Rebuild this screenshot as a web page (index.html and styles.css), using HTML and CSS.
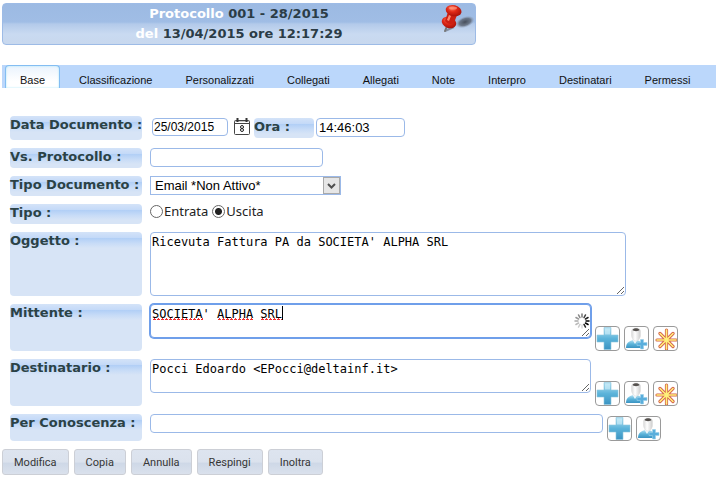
FILE: index.html
```html
<!DOCTYPE html>
<html lang="it">
  <head>
    <meta charset="UTF-8" />
    <meta name="viewport" content="width=device-width, initial-scale=1.0" />
    <title>Protocollo 001 - 28/2015</title>
    <link rel="stylesheet" href="styles.css">
  </head>

  <body>
    <!-- Icone condivise -->
    <svg class="defs" width="0" height="0" aria-hidden="true">
      <defs>
        <linearGradient id="blue" x1="0" y1="0" x2="0" y2="1">
          <stop offset="0" stop-color="#b4e0f2" />
          <stop offset="0.5" stop-color="#5cb4da" />
          <stop offset="1" stop-color="#3a93c2" />
        </linearGradient>
        <linearGradient id="body" x1="0" y1="0" x2="1" y2="0">
          <stop offset="0" stop-color="#d8d8d8" />
          <stop offset="0.4" stop-color="#ffffff" />
          <stop offset="1" stop-color="#cccccc" />
        </linearGradient>
        <radialGradient id="red" cx="0.35" cy="0.35" r="0.7">
          <stop offset="0" stop-color="#ff7a5c" />
          <stop offset="0.45" stop-color="#e02a18" />
          <stop offset="1" stop-color="#a8120a" />
        </radialGradient>
        <radialGradient id="shadow">
          <stop offset="0" stop-color="#3c424c" stop-opacity="0.9" />
          <stop offset="0.6" stop-color="#5d6674" stop-opacity="0.8" />
          <stop offset="1" stop-color="#8f9cb0" stop-opacity="0" />
        </radialGradient>
      </defs>
      <symbol id="plus" viewBox="0 0 23 23">
        <path d="M8 .5h7v7.500h7v7h-7v7.500h-7v-7.500h-7v-7h7z" fill="url(#blue)" stroke="#8cc6de" stroke-width="0.600" />
        <path d="M9 1.500h5v6h-5z" fill="#d4f1fb" opacity="0.600" />
      </symbol>
      <symbol id="user" viewBox="0 0 23 23">
        <path d="M1 21c0-5 3-7 7-8h4c4 1 5 4 5 8z" fill="url(#blue)" />
        <path d="M7 12l3 5 3-5z" fill="#eef6fa" />
        <path d="M6.500 4c0-4 9-4 9 0v4c0 3-2 6-4.500 6s-4.500-3-4.500-6z" fill="url(#body)" stroke="#dcdcdc" stroke-width="0.500" />
        <path d="M7.500 3c1-2.500 6-2.500 7 0-1 1.500-6 1.500-7 0z" fill="#55514e" />
        <path d="M15.500 12.500h3v3h3.500v3h-3.500v3.500h-3v-3.500h-3.500v-3h3.500z" fill="#5aaedc" stroke="#9cd0ea" stroke-width="0.600" />
      </symbol>
      <symbol id="star" viewBox="0 0 23 23">
        <path d="M12.500 3v19M3 13h19M6 6.500l13 13M19 6.500l-13 13" stroke="#d4604a" stroke-width="3.200" stroke-linecap="round" />
        <path d="M12.500 3v19M3 13h19M6 6.500l13 13M19 6.500l-13 13" stroke="#fff07a" stroke-width="1.600" stroke-linecap="round" />
      </symbol>
    </svg>

    <header>
      <h1>
        <span>Protocollo</span> 001 - 28/2015<br />
        <span>del</span> 13/04/2015 ore 12:17:29
      </h1>
      <svg class="pin" width="36" height="30" viewBox="0 0 36 30" aria-hidden="true">
        <ellipse cx="26" cy="18" rx="10" ry="5.500" fill="url(#shadow)" transform="rotate(-20 26 18)" />
        <path d="M15 23l-9 4" stroke="#6d7684" stroke-width="2" opacity="0.700" />
        <path d="M8 22l-2 5" stroke="#777" stroke-width="2" stroke-linecap="round" />
        <ellipse cx="10" cy="18.500" rx="7.500" ry="5.500" fill="url(#red)" transform="rotate(20 10 18.500)" />
        <path d="M9 8l9 3-3 8c-3 2-7 1-9-2z" fill="#cc2013" />
        <path d="M10 11l2 1-2 5-2-1z" fill="#ff8a70" />
        <ellipse cx="14.500" cy="6.500" rx="8" ry="5.500" fill="url(#red)" transform="rotate(15 14 7)" />
        <ellipse cx="14" cy="4" rx="4" ry="1.500" fill="#ff9a80" opacity="0.700" />
      </svg>
    </header>

    <nav>
      <a class="active" href="#base">Base</a>
      <a href="#classificazione">Classificazione</a>
      <a href="#personalizzati">Personalizzati</a>
      <a href="#collegati">Collegati</a>
      <a href="#allegati">Allegati</a>
      <a href="#note">Note</a>
      <a href="#interpro">Interpro</a>
      <a href="#destinatari">Destinatari</a>
      <a href="#permessi">Permessi</a>
    </nav>

    <form>
      <div class="row">
        <label class="lbl" for="data">Data Documento :</label>
        <div class="fields date-fields">
          <input id="data" class="date" type="text" value="25/03/2015" />
          <button class="calendar" type="button" aria-label="Calendario">
            <svg width="16" height="17" viewBox="0 0 16 17">
              <rect x="0.500" y="2.500" width="15" height="14" rx="1" fill="#fff" stroke="#444" />
              <path d="M0 5.500h16" stroke="#444" />
              <path d="M1 3.500h14" stroke="#c8c8c8" />
              <path d="M3.500 0v4M12.500 0v4" stroke="#333" stroke-width="2" />
              <circle cx="8" cy="9" r="1.500" fill="none" stroke="#222" />
              <circle cx="8" cy="12" r="1.500" fill="none" stroke="#222" />
            </svg>
          </button>
          <label class="lbl ora" for="ora">Ora :</label>
          <input id="ora" class="time" type="text" value="14:46:03" />
        </div>
      </div>

      <div class="row">
        <label class="lbl" for="vs">Vs. Protocollo :</label>
        <div class="fields"><input id="vs" class="vs" type="text" /></div>
      </div>

      <div class="row">
        <label class="lbl" for="tipodoc">Tipo Documento :</label>
        <div class="fields">
          <div class="select">
            <select id="tipodoc">
              <option>Email *Non Attivo*</option>
            </select>
            <svg width="17" height="17" viewBox="0 0 17 17" aria-hidden="true">
              <rect x="0.500" y="0.500" width="16" height="16" fill="#e6e6e6" stroke="#a9a9a9" />
              <path d="M5 7l3.500 3.500L12 7" fill="none" stroke="#505050" stroke-width="2" />
            </svg>
          </div>
        </div>
      </div>

      <div class="row" role="radiogroup" aria-labelledby="tipo">
        <span class="lbl" id="tipo">Tipo :</span>
        <div class="fields radios">
          <label><input type="radio" name="tipo" />Entrata</label>
          <label><input type="radio" name="tipo" checked />Uscita</label>
        </div>
      </div>

      <div class="row">
        <label class="lbl" for="oggetto">Oggetto :</label>
        <div class="fields"><textarea id="oggetto" class="oggetto">Ricevuta Fattura PA da SOCIETA' ALPHA SRL</textarea></div>
      </div>

      <div class="row">
        <label class="lbl" for="mittente">Mittente :</label>
        <div class="fields">
          <div class="box">
            <textarea id="mittente" class="soggetto focused" spellcheck="false">SOCIETA' ALPHA SRL</textarea>
            <!-- Sottolineatura ortografica e cursore -->
            <div class="spelling" aria-hidden="true"><i class="w7"></i><i class="w5"></i><i class="w3"></i><b></b></div>
            <svg class="loader" width="16" height="16" viewBox="-8 -8 16 16" aria-hidden="true">
              <g stroke-width="1.500" stroke-linecap="round">
                <path d="M0-4v-3" stroke="#777" />
                <path d="M0-4v-3" stroke="#444" transform="rotate(30)" />
                <path d="M0-4v-3" stroke="#222" transform="rotate(60)" />
                <path d="M0-4v-3" stroke="#000" transform="rotate(90)" />
                <path d="M0-4v-3" stroke="#000" transform="rotate(120)" />
                <path d="M0-4v-3" stroke="#222" transform="rotate(150)" />
                <path d="M0-4v-3" stroke="#ddd" transform="rotate(180)" />
                <path d="M0-4v-3" stroke="#ccc" transform="rotate(210)" />
                <path d="M0-4v-3" stroke="#bbb" transform="rotate(240)" />
                <path d="M0-4v-3" stroke="#aaa" transform="rotate(270)" />
                <path d="M0-4v-3" stroke="#999" transform="rotate(300)" />
                <path d="M0-4v-3" stroke="#888" transform="rotate(330)" />
              </g>
            </svg>
          </div>
          <div class="tools">
            <button type="button" aria-label="Aggiungi mittente"><svg><use href="#plus" /></svg></button>
            <button type="button" aria-label="Nuovo mittente"><svg><use href="#user" /></svg></button>
            <button type="button" aria-label="Preferiti"><svg><use href="#star" /></svg></button>
          </div>
        </div>
      </div>

      <div class="row">
        <label class="lbl" for="destinatario">Destinatario :</label>
        <div class="fields">
          <textarea id="destinatario" class="soggetto" spellcheck="false">Pocci Edoardo &lt;EPocci@deltainf.it&gt;</textarea>
          <div class="tools">
            <button type="button" aria-label="Aggiungi destinatario"><svg><use href="#plus" /></svg></button>
            <button type="button" aria-label="Nuovo destinatario"><svg><use href="#user" /></svg></button>
            <button type="button" aria-label="Preferiti"><svg><use href="#star" /></svg></button>
          </div>
        </div>
      </div>

      <div class="row">
        <label class="lbl" for="conoscenza">Per Conoscenza :</label>
        <div class="fields">
          <input id="conoscenza" class="conoscenza" type="text" />
          <div class="tools">
            <button type="button" aria-label="Aggiungi per conoscenza"><svg><use href="#plus" /></svg></button>
            <button type="button" aria-label="Nuovo per conoscenza"><svg><use href="#user" /></svg></button>
          </div>
        </div>
      </div>
    </form>

    <footer>
      <button type="button">Modifica</button>
      <button type="button">Copia</button>
      <button type="button">Annulla</button>
      <button type="button">Respingi</button>
      <button type="button">Inoltra</button>
    </footer>
  </body>
</html>
```
FILE: styles.css
```css
* {
  box-sizing: border-box;
}

body {
  margin: 0;
  padding: 3px 0 0 2px;
  background-color: #fff;
  color: #2b3c46;
  font-family: "DejaVu Sans", Verdana, sans-serif;
  font-size: 12px;
}

.defs {
  position: absolute;
}

header {
  position: relative;
  max-width: 474px;
  border: 1px solid #9dbbe6;
  border-radius: 4px;
  background: linear-gradient(#9cbae3, #a0bde5 45%, #b3caea 50%, #c9daf1 75%, #c8d8ee);
}

h1 {
  margin: 0;
  font-size: 13px;
  line-height: 20px;
  text-align: center;
}

h1 span {
  color: #fff;
}

.pin {
  position: absolute;
  top: 0;
  right: 0;
}

nav {
  display: flex;
  height: 23px;
  margin-top: 20px;
  padding-left: 3px;
  background-color: #bbd7fb;
  font-family: "Liberation Sans", Arial, sans-serif;
  font-size: 11px;
}

nav a {
  padding: 0 16px 0 17px;
  color: #111;
  line-height: 30px;
  text-decoration: none;
  white-space: nowrap;
}

nav .active {
  margin-right: 2px;
  padding: 0 14px;
  border: 1px solid #84bdf2;
  border-bottom: none;
  border-radius: 4px 4px 0 0;
  background: linear-gradient(#eaf3fd, #fff 70%);
  box-shadow: inset 0 0 2px #9fe4f8;
  line-height: 28px;
}

form {
  display: flex;
  flex-direction: column;
  gap: 8px;
  margin-top: 28px;
  padding-left: 8px;
}

.row {
  display: grid;
  grid-template-columns: 132px 1fr;
  gap: 8px;
  min-height: 20px;
}

.lbl {
  border-radius: 4px;
  background: linear-gradient(#d4e3f8, #c3d9f8 6px, #b0cef6 6px, #c6dbf7 11px, #d7e4f6 16px);
  color: #2b4246;
  font-size: 13px;
  font-weight: bold;
  line-height: 18px;
  white-space: nowrap;
}

.fields {
  display: flex;
  align-items: flex-start;
  gap: 4px;
}

input,
textarea,
select {
  margin: 0;
  border: 1px solid #9bb9e8;
  border-radius: 4px;
  background-color: #fff;
  color: #000;
  outline: none;
}

input,
select {
  height: 19px;
  padding: 0 2px;
  font-family: "Liberation Sans", Arial, sans-serif;
  font-size: 13px;
}

textarea {
  display: block;
  padding: 2px 1px;
  font-family: "DejaVu Sans Mono", Consolas, monospace;
  font-size: 12px;
  line-height: 15px;
}

.date-fields {
  padding: 2px 0 2px 2px;
}

.date {
  width: 76px;
  height: 18px;
  padding: 0 1px;
  font-size: 12px;
}

.calendar {
  display: flex;
  margin-left: 2px;
  padding: 0;
  border: none;
  background: none;
}

.ora {
  width: 60px;
  height: 20px;
  margin-right: -2px;
}

.time {
  width: 89px;
}

.vs {
  width: 173px;
}

.select {
  position: relative;
}

.select svg {
  position: absolute;
  top: 1px;
  right: 1px;
  pointer-events: none;
}

select {
  display: block;
  width: 191px;
  padding: 0 4px;
  border-radius: 0;
  appearance: none;
}

.radios label {
  display: flex;
  align-items: center;
  gap: 1px;
  color: #222;
  font-family: "Noto Sans", Tahoma, sans-serif;
  font-size: 13px;
  line-height: 15px;
}

input[type="radio"] {
  width: 13px;
  height: 13px;
  padding: 0;
  border: 1px solid #666;
  border-radius: 50%;
  appearance: none;
}

input[type="radio"]:checked {
  background: radial-gradient(circle, #222 3px, #fff 4px);
}

.oggetto {
  width: 476px;
  height: 64px;
}

.soggetto {
  width: 441px;
  height: 34px;
}

.box {
  position: relative;
}

.focused {
  border-color: #6f9fea;
  box-shadow: 0 0 0 1px #6f9fea;
}

.spelling {
  position: absolute;
  top: 14px;
  left: 2px;
  display: flex;
  gap: 1ch;
  font-family: "DejaVu Sans Mono", Consolas, monospace;
  font-size: 12px;
  pointer-events: none;
}

.spelling i {
  height: 3px;
  background: conic-gradient(from 135deg at 50% 0, #f03030 90deg, transparent 0) 0 0 / 4px 2px repeat-x;
}

.w7 {
  width: 7ch;
  margin-right: 1ch;
}

.w5 {
  width: 5ch;
}

.w3 {
  width: 3ch;
}

.spelling b {
  width: 1px;
  height: 14px;
  margin: -12px 0 0 -1ch;
  background-color: #000;
}

.loader {
  position: absolute;
  top: 9px;
  right: 1px;
}

.tools {
  display: flex;
  align-self: flex-end;
  gap: 4px;
  padding-top: 22px;
}

.conoscenza {
  width: 453px;
}

.conoscenza + .tools {
  padding-top: 2px;
}

.tools button {
  width: 25px;
  height: 25px;
  padding: 0;
  border: 1px solid #9a9a9a;
  border-radius: 4px;
  background-color: #fff;
}

.tools svg {
  display: block;
  width: 23px;
  height: 23px;
}

footer {
  display: flex;
  gap: 5px;
  margin-top: 8px;
}

footer button {
  height: 26px;
  padding: 0 11px;
  border: 1px solid #cccfd6;
  border-radius: 3px;
  background: linear-gradient(#dde4ef, #dbe2ed 50%, #ced8e7 55%, #dae1ec);
  color: #363636;
  font-family: Roboto, Tahoma, sans-serif;
  font-size: 11px;
}

.row:first-child {
  min-height: 24px;
}
```
